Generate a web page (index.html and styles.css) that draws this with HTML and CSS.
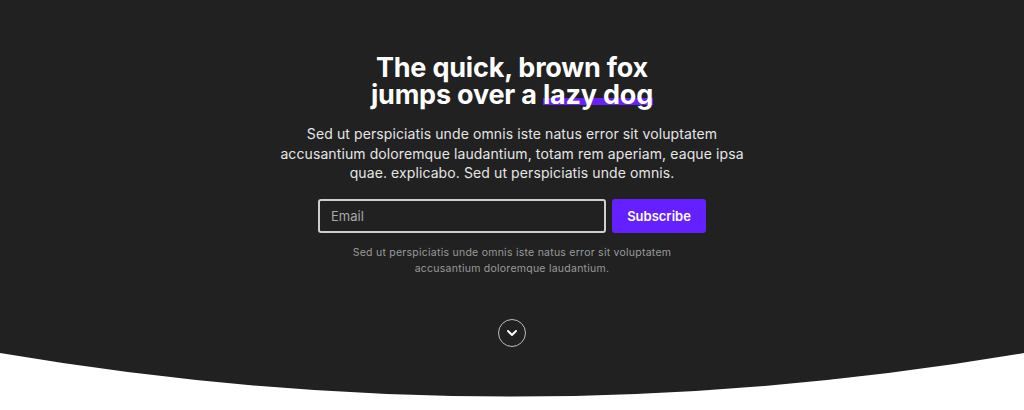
FILE: index.html
```html
<!DOCTYPE html>
<html lang="en">
<head>
<meta charset="utf-8">
<title>Subscribe</title>
<link rel="stylesheet" href="styles.css">
</head>
<body>
<section class="hero">
  <div class="hero-inner">
    <h1 class="title">The quick, brown fox<br>jumps over a <span class="mark">lazy dog</span></h1>
    <p class="lead">Sed ut perspiciatis unde omnis iste natus error sit voluptatem accusantium doloremque laudantium, totam rem aperiam, eaque ipsa quae. explicabo. Sed ut perspiciatis unde omnis.</p>
    <form class="signup">
      <input class="email" type="email" placeholder="Email">
      <button class="btn" type="button">Subscribe</button>
    </form>
    <p class="note">Sed ut perspiciatis unde omnis iste natus error sit voluptatem accusantium doloremque laudantium.</p>
    <a class="scroll" href="#">
      <svg width="12" height="8" viewBox="0 0 12 8"><path d="M2 2 L6 6 L10 2" fill="none" stroke="#fff" stroke-width="2" stroke-linecap="round" stroke-linejoin="round"/></svg>
    </a>
  </div>
</section>
<svg class="curve" width="1024" height="46" viewBox="0 0 1024 46" preserveAspectRatio="none"><path d="M0 0 L1024 0 Q512 87 0 0 Z" fill="#212121"/></svg>
</body>
</html>
```

FILE: styles.css
```css
html, body {
  margin: 0;
  padding: 0;
  background: #ffffff;
}
body {
  font-family: Inter, "Liberation Sans", sans-serif;
  overflow: hidden;
}
.hero {
  background: #212121;
  height: 353px;
  box-sizing: border-box;
  padding-top: 54px;
}
.hero-inner {
  display: flex;
  flex-direction: column;
  align-items: center;
  text-align: center;
}
.title {
  margin: 0;
  color: #ffffff;
  font-size: 27px;
  font-weight: 700;
  line-height: 27px;
  letter-spacing: -0.2px;
}
.mark {
  background: linear-gradient(#6a1fff, #6a1fff) no-repeat left 20px / 100% 7px;
}
.lead {
  margin: 16px 0 0;
  width: 490px;
  color: #e6e6e6;
  font-size: 14px;
  line-height: 19.5px;
  letter-spacing: 0.1px;
}
.signup {
  display: flex;
  gap: 6px;
  margin-top: 16px;
}
.email {
  width: 288px;
  height: 34px;
  box-sizing: border-box;
  background: #212121;
  border: 2px solid #cfcfcf;
  border-radius: 3px;
  padding: 0 11px;
  color: #fff;
  font-family: inherit;
  font-size: 13px;
  outline: none;
}
.email::placeholder {
  color: #a8a8a8;
}
.btn {
  width: 94px;
  height: 34px;
  border: none;
  border-radius: 3px;
  background: #6420ff;
  color: #fff;
  font-family: inherit;
  font-size: 13px;
  font-weight: 600;
}
.note {
  margin: 12px 0 0;
  width: 340px;
  color: #9a9a9a;
  font-size: 10.5px;
  line-height: 16px;
  letter-spacing: 0.25px;
}
.scroll {
  margin-top: 42px;
  width: 26px;
  height: 26px;
  border: 1px solid #bdbdbd;
  border-radius: 50%;
  display: flex;
  align-items: center;
  justify-content: center;
}
.curve {
  display: block;
}
```
